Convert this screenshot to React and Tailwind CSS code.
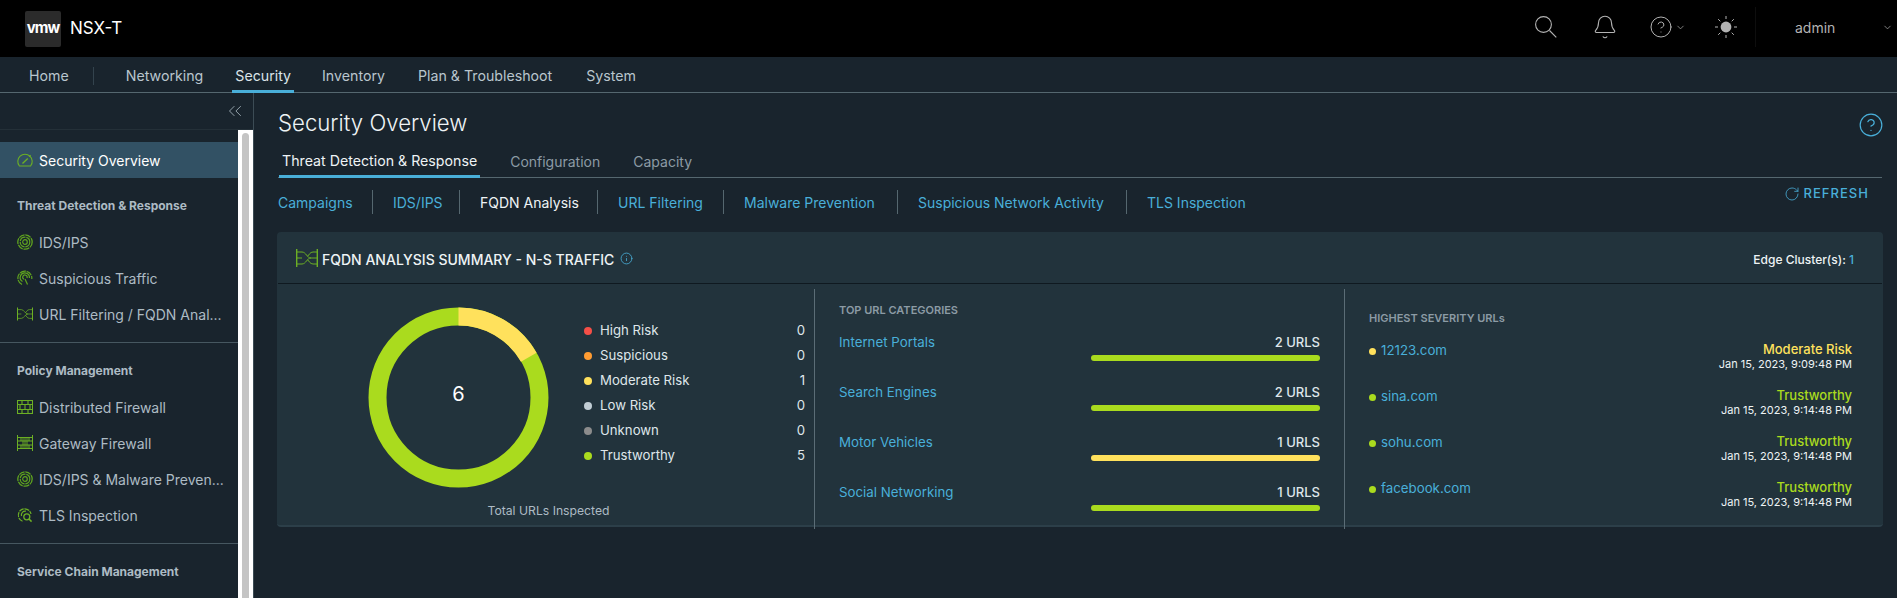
import { Bell, ChevronDown, ChevronsLeft, CircleHelp, Info, RotateCw } from "lucide-react";

const FONT = "font-['Inter','Open_Sans',sans-serif]";

function GaugeIcon() {
  return (
    <svg viewBox="0 0 16 16" className="h-[16px] w-[16px] text-[#6cb024]" fill="none" stroke="currentColor" strokeWidth="1.1">
      <path d="M2.4 14h11.2a7.2 7.2 0 1 0-11.2 0z" />
      <path d="M5.5 11.5 10.8 6.6" strokeWidth="1.4" />
      <path d="M12 4.8 13.6 3.2" />
    </svg>
  );
}

function RingsIcon() {
  return (
    <svg viewBox="0 0 16 16" className="h-[16px] w-[16px] text-[#5fa31f]" fill="none" stroke="currentColor">
      <circle cx="8" cy="8" r="7.2" strokeWidth="1.3" strokeDasharray="6 .8" />
      <circle cx="8" cy="8" r="4.8" strokeWidth="1.2" strokeDasharray="7 .8" />
      <circle cx="8" cy="8" r="2.3" strokeWidth="1.2" />
    </svg>
  );
}

function TrafficIcon() {
  return (
    <svg viewBox="0 0 16 16" className="h-[16px] w-[16px] text-[#5fa31f]" fill="none" stroke="currentColor" strokeWidth="1.2">
      <path d="M5 14.5A7 7 0 1 1 14.8 9" strokeDasharray="6 .8" />
      <path d="M5.5 11.5A4.6 4.6 0 1 1 12.4 8" />
      <path d="M7 9.2A2.2 2.2 0 1 1 10 8" />
      <path d="M8 9l2.5 5.5" />
    </svg>
  );
}

function FlowIcon({ className }) {
  return (
    <svg viewBox="0 0 22 18" className={className} fill="none" stroke="currentColor" strokeWidth="1">
      <path d="M.7 0v18M21.3 0v18" strokeWidth="1.4" />
      <path d="M1 3h5c4 0 5 6 9 6h6" />
      <path d="M1 15h5c4 0 5-6 9-6" />
      <path d="M21 3h-4c-3 0-4 3-5.500 4.500" />
      <path d="M21 15h-4c-3 0-4-3-5.500-4.500" />
      <path d="M1 9h5" />
    </svg>
  );
}

function WallIcon() {
  return (
    <svg viewBox="0 0 16 14" className="h-[14px] w-[16px] text-[#6cb024]" fill="none" stroke="currentColor" strokeWidth="1.1">
      <rect x=".5" y=".5" width="15" height="13" />
      <path d="M.5 4.500h15M.5 9.500h15" />
      <path d="M5 .5v4M11 .5v4M8 4.500v5M3 4.500v5M13 4.500v5M5 9.500v4M11 9.500v4" />
    </svg>
  );
}

function GateWallIcon() {
  return (
    <svg viewBox="0 0 16 16" className="h-[16px] w-[16px] text-[#6cb024]" fill="none" stroke="currentColor" strokeWidth="1">
      <path d="M.5 0v16M15.500 0v16" />
      <path d="M.5 2.500h15M.5 6h15M.5 10h15M.5 13.500h15" />
      <path d="M4 2.500V6M12 2.500V6M4 10v3.500M12 10v3.500" />
      <rect x="5" y="2.500" width="6" height="11" fill="currentColor" opacity=".45" stroke="none" />
    </svg>
  );
}

function TlsIcon() {
  return (
    <svg viewBox="0 0 16 16" className="h-[16px] w-[16px] text-[#6cb024]" fill="none" stroke="currentColor" strokeWidth="1.2">
      <path d="M5.500 14.200A6.400 6.400 0 1 1 14 7" strokeDasharray="5 .8" />
      <path d="M4.500 9A3.800 3.800 0 0 1 9 4.200" />
      <circle cx="9.800" cy="9.800" r="3" strokeWidth="1.3" />
      <path d="m12 12 2.600 2.600" strokeWidth="1.5" />
    </svg>
  );
}

function SearchIcon() {
  return (
    <svg viewBox="0 0 22 22" className="h-[22px] w-[22px]" fill="none" stroke="currentColor" strokeWidth="1.1">
      <circle cx="8.500" cy="8.500" r="7.900" />
      <path d="m14.500 14.500 6.800 6.800" />
    </svg>
  );
}

function SunIcon() {
  return (
    <svg viewBox="0 0 22 22" className="h-[22px] w-[22px] text-[#b3b3b3]" fill="currentColor" stroke="currentColor" strokeWidth="1">
      <circle cx="11" cy="11" r="5.400" stroke="none" />
      <path d="M11 0v3M11 19v3M0 11h3M19 11h3M3.200 3.200l2.100 2.100M16.700 16.700l2.100 2.100M3.200 18.800l2.100-2.100M16.700 5.300l2.100-2.100" />
    </svg>
  );
}

function TopBar() {
  return (
    <header className="flex h-[57px] shrink-0 items-center bg-black pl-[25px]">
      <div className="grid h-[36px] w-[36px] place-items-center rounded-[2px] bg-[#2b2b2b] text-[15px] font-bold tracking-[-0.06em] text-white">vmw</div>
      <span className="ml-[9px] text-[17px] text-white">NSX-T</span>
      <div className="-mt-[3px] ml-auto flex items-center text-[#b3b3b3]">
        <SearchIcon />
        <Bell className="ml-[35px] h-[26px] w-[26px]" strokeWidth={1} />
        <CircleHelp className="ml-[31px] h-[24px] w-[24px]" strokeWidth={1} />
        <ChevronDown className="ml-[2px] h-[11px] w-[11px]" strokeWidth={1.5} />
        <div className="ml-[29px]"><SunIcon /></div>
        <div className="ml-[18px] flex h-[40px] w-[142px] items-center border-l border-[#0e0e0e] pl-[39px]">
          <span className="text-[14px] text-[#b3b3b3]">admin</span>
          <ChevronDown className="ml-[47px] h-[11px] w-[11px]" strokeWidth={1.5} />
        </div>
      </div>
    </header>
  );
}

function NavBar() {
  return (
    <nav className="flex h-[36px] shrink-0 items-stretch border-b border-[#55676f] bg-[#19242d] text-[14.2px] text-[#b9c6ce]">
      <a className="ml-[29px] flex items-center pt-[2px]">Home</a>
      <span className="ml-[24px] mt-[10px] h-[18px] w-px bg-[#33434d]" />
      <a className="ml-[32px] flex items-center pt-[2px]">Networking</a>
      <a className="-mb-px ml-[29px] flex items-center border-b-[3px] border-[#49afd9] px-[3px] pt-[4px] text-[#dbe4e9]">Security</a>
      <a className="ml-[28px] flex items-center pt-[2px]">Inventory</a>
      <a className="ml-[33px] flex items-center pt-[2px]">Plan &amp; Troubleshoot</a>
      <a className="ml-[34px] flex items-center pt-[2px]">System</a>
    </nav>
  );
}

function SideItem({ icon, label, active }) {
  return (
    <div className={`flex h-[36px] items-center overflow-hidden whitespace-nowrap text-[14px] ${active ? "bg-[#325164] text-white" : "text-[#adbbc4]"}`}>
      <span className="ml-[17px] flex w-[22px] shrink-0 items-center">{icon}</span>
      <span>{label}</span>
    </div>
  );
}

function SideLabel({ children }) {
  return <div className="mb-[9px] mt-[19px] h-[18px] pl-[17px] text-[12px] font-bold leading-[18px] text-[#adbbc4]">{children}</div>;
}

function Sidebar() {
  return (
    <aside className="flex w-[254px] shrink-0 flex-col border-r border-[#3c4c55]">
      <div className="flex h-[37px] shrink-0 items-center justify-end border-b border-[#243038] pr-[7px] text-[#adbbc4]">
        <ChevronsLeft className="h-[22px] w-[22px]" strokeWidth={0.9} />
      </div>
      <div className="flex min-h-0 flex-1">
        <div className="w-[238px] shrink-0 pt-[12px]">
          <SideItem active icon={<GaugeIcon />} label="Security Overview" />
          <SideLabel>Threat Detection &amp; Response</SideLabel>
          <SideItem icon={<RingsIcon />} label="IDS/IPS" />
          <SideItem icon={<TrafficIcon />} label="Suspicious Traffic" />
          <SideItem icon={<FlowIcon className="h-[14px] w-[16px] text-[#6cb024]" />} label="URL Filtering / FQDN Anal..." />
          <div className="mt-[10px] h-px bg-[#465760]" />
          <SideLabel>Policy Management</SideLabel>
          <SideItem icon={<WallIcon />} label="Distributed Firewall" />
          <SideItem icon={<GateWallIcon />} label="Gateway Firewall" />
          <SideItem icon={<RingsIcon />} label="IDS/IPS & Malware Preven..." />
          <SideItem icon={<TlsIcon />} label="TLS Inspection" />
          <div className="mt-[10px] h-px bg-[#465760]" />
          <SideLabel>Service Chain Management</SideLabel>
        </div>
        <div className="flex-1 bg-white px-[4px] pt-[3px]">
          <div className="h-full rounded-t-[4px] bg-[#c4c4c4]" />
        </div>
      </div>
    </aside>
  );
}

function Donut() {
  return (
    <div className="relative h-[181px] w-[181px] shrink-0">
      <svg viewBox="0 0 181 181" className="h-full w-full" fill="none" strokeWidth="18">
        <circle cx="90.5" cy="90.5" r="81" stroke="#aadb1e" />
        <circle cx="90.5" cy="90.5" r="81" stroke="#ffe15c" strokeDasharray="84.82 424.12" transform="rotate(-90 90.5 90.5)" />
      </svg>
      <div className="absolute inset-0 flex items-center justify-center pb-[7px] text-[20px] text-white">6</div>
    </div>
  );
}

const legend = [
  ["High Risk", 0, "bg-[#f54f47]"],
  ["Suspicious", 0, "bg-[#ff9c32]"],
  ["Moderate Risk", 1, "bg-[#ffe15c]"],
  ["Low Risk", 0, "bg-[#c1cdd4]"],
  ["Unknown", 0, "bg-[#8c8c8c]"],
  ["Trustworthy", 5, "bg-[#aadb1e]"],
];

const categories = [
  ["Internet Portals", "2 URLS", "bg-[#aadb1e]"],
  ["Search Engines", "2 URLS", "bg-[#aadb1e]"],
  ["Motor Vehicles", "1 URLS", "bg-[#ffe15c]"],
  ["Social Networking", "1 URLS", "bg-[#aadb1e]"],
];

const urls = [
  ["12123.com", "Moderate Risk", "Jan 15, 2023, 9:09:48 PM", "bg-[#ffe15c]", "text-[#ffe15c]"],
  ["sina.com", "Trustworthy", "Jan 15, 2023, 9:14:48 PM", "bg-[#aadb1e]", "text-[#aadb1e]"],
  ["sohu.com", "Trustworthy", "Jan 15, 2023, 9:14:48 PM", "bg-[#aadb1e]", "text-[#aadb1e]"],
  ["facebook.com", "Trustworthy", "Jan 15, 2023, 9:14:48 PM", "bg-[#aadb1e]", "text-[#aadb1e]"],
];

function SummaryCard() {
  return (
    <section className="mt-[18px] h-[295px] rounded-[4px] border-b-2 border-[#2c3f49] bg-[#22333c]">
      <div className="mx-px flex h-[52px] items-center border-b border-[#0f1920] pl-[18px] pr-[28px]">
        <FlowIcon className="h-[18px] w-[22px] text-[#6cb024]" />
        <h2 className="ml-[4px] mt-[3px] text-[14px] font-medium text-[#eef3f5]">FQDN ANALYSIS SUMMARY - N-S TRAFFIC</h2>
        <Info className="ml-[6px] mt-[1px] h-[13px] w-[13px] text-[#49afd9]" strokeWidth={1.5} />
        <div className="ml-auto mt-[5px] text-[12px] font-medium text-[#eef3f5]">
          Edge Cluster(s): <span className="text-[#49afd9]">1</span>
        </div>
      </div>

      <div className="mt-[5px] flex h-[240px] pl-px">
        <div className="w-[537px] shrink-0 border-r border-[#5b6d76]">
          <div className="flex pl-[90px] pt-[18px]">
            <Donut />
            <div className="ml-[35px] w-[221px] pt-[11px]">
              {legend.map(([name, count, dot]) => (
                <div key={name} className="flex h-[25px] items-center text-[13.2px] text-[#dfe6ea]">
                  <span className={`mt-px h-[8px] w-[8px] rounded-full ${dot}`} />
                  <span className="ml-[8px]">{name}</span>
                  <span className="ml-auto">{count}</span>
                </div>
              ))}
            </div>
          </div>
          <p className="mt-[15px] pl-[5px] text-center text-[12.2px] leading-[16px] text-[#adbbc4]">Total URLs Inspected</p>
        </div>

        <div className="w-[530px] shrink-0 border-r border-[#5b6d76] pl-[24px] pr-[24px] pt-[13px]">
          <h3 className="mb-[16px] text-[11px] font-semibold leading-[16px] text-[#8c9ba5]">TOP URL CATEGORIES</h3>
          {categories.map(([name, count, bar]) => (
            <div key={name} className="flex h-[50px] justify-between">
              <a className="text-[13.3px] leading-[16px] text-[#49afd9]">{name}</a>
              <div className="w-[229px]">
                <div className="text-right text-[13px] font-medium leading-[16px] text-[#dfe6ea]">{count}</div>
                <div className={`mt-[5px] h-[6px] rounded-[3px] ${bar}`} />
              </div>
            </div>
          ))}
        </div>

        <div className="flex-1 pl-[24px] pr-[31px] pt-[21px]">
          <h3 className="mb-[16px] text-[11px] font-semibold leading-[16px] text-[#8c9ba5]">HIGHEST SEVERITY URLs</h3>
          {urls.map(([name, status, time, dot, color]) => (
            <div key={name} className="flex h-[46px] justify-between">
              <div className="mt-[1px] flex h-[16px] items-center">
                <span className={`h-[7px] w-[7px] rounded-full ${dot}`} />
                <a className="ml-[5px] text-[13.3px] text-[#49afd9]">{name}</a>
              </div>
              <div className="text-right">
                <div className={`text-[13px] font-medium leading-[15px] ${color}`}>{status}</div>
                <div className="text-[11px] leading-[14px] text-[#eef3f5]">{time}</div>
              </div>
            </div>
          ))}
        </div>
      </div>
    </section>
  );
}

function SubLink({ children, active, className }) {
  return <a className={`flex h-[24px] items-center whitespace-nowrap pl-[20px] text-[14px] first:pl-0 ${active ? "text-[#eef3f5]" : "text-[#49afd9]"} ${className}`}>{children}</a>;
}

function Main() {
  return (
    <main className="min-w-0 flex-1 pl-[23px] pr-[14px] pt-[14px]">
      <div className="ml-px flex h-[32px] items-center justify-between">
        <h1 className="text-[22.2px] font-light text-[#eef3f5]">Security Overview</h1>
        <CircleHelp className="-mr-[1px] mt-[4px] h-[26px] w-[26px] text-[#49afd9]" strokeWidth={1.1} />
      </div>

      <div className="ml-px mr-px flex h-[39px] items-end border-b border-[#55676f] pt-[6px]">
        <a className="-mb-px ml-px flex h-[33px] items-center border-b-[3px] border-[#49afd9] px-[3px] pt-[1px] text-[14.2px] text-[#eef3f5]">Threat Detection &amp; Response</a>
        <a className="flex h-[33px] items-center pl-[30px] pt-[1px] text-[14px] text-[#8c9ba5]">Configuration</a>
        <a className="flex h-[33px] items-center pl-[33px] pt-[1px] text-[14px] text-[#8c9ba5]">Capacity</a>
      </div>

      <div className="ml-px mr-px mt-[12px] flex items-start justify-between">
        <div className="flex divide-x divide-[#55676f]">
          <SubLink className="w-[95px]">Campaigns</SubLink>
          <SubLink className="w-[87px]">IDS/IPS</SubLink>
          <SubLink active className="w-[138px]">FQDN Analysis</SubLink>
          <SubLink className="w-[126px]">URL Filtering</SubLink>
          <SubLink className="w-[174px]">Malware Prevention</SubLink>
          <SubLink className="w-[229px]">Suspicious Network Activity</SubLink>
          <SubLink>TLS Inspection</SubLink>
        </div>
        <button className="-mt-[2px] mr-[13px] flex h-[12px] items-center text-[13px] font-medium tracking-[0.08em] text-[#49afd9]">
          <RotateCw className="mr-[3px] h-[16px] w-[16px]" strokeWidth={1.2} />
          REFRESH
        </button>
      </div>

      <SummaryCard />
    </main>
  );
}

export default function App() {
  return (
    <div className={`flex h-[598px] w-full flex-col overflow-hidden bg-[#19242d] ${FONT}`}>
      <TopBar />
      <NavBar />
      <div className="flex min-h-0 flex-1">
        <Sidebar />
        <Main />
      </div>
    </div>
  );
}
